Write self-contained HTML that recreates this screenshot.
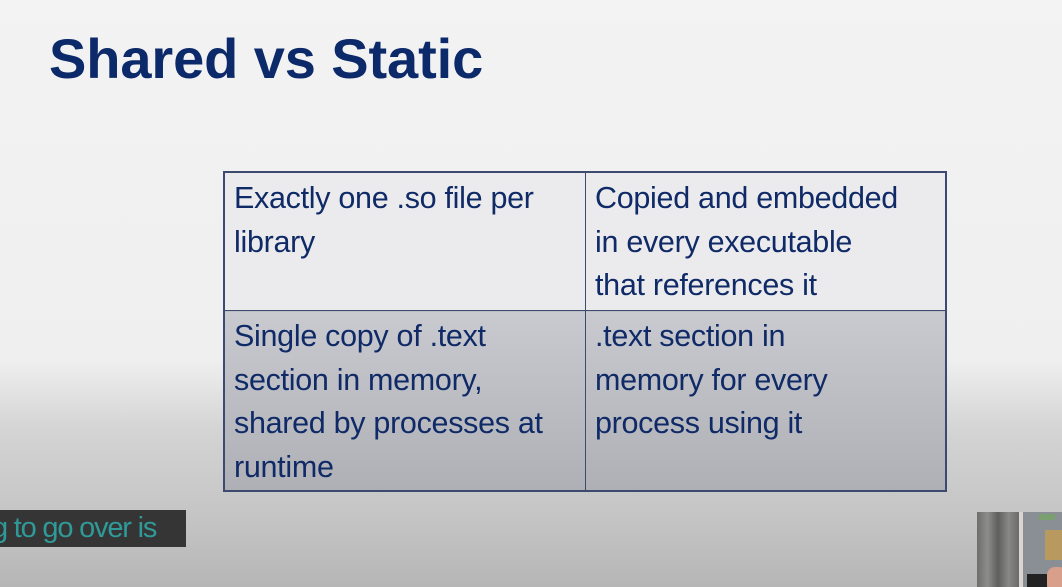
<!DOCTYPE html>
<html><head><meta charset="utf-8"><style>
html,body{margin:0;padding:0}
body{width:1062px;height:587px;overflow:hidden;position:relative;
background:linear-gradient(to bottom,#f3f3f3 0px,#efefef 360px,#d4d4d4 430px,#c4c4c4 520px,#b6b6b6 587px);
font-family:"Liberation Sans",sans-serif}
h1{position:absolute;left:49px;top:31px;margin:0;font-size:56px;line-height:56px;font-weight:bold;color:#0c2a6a;letter-spacing:-0.1px;white-space:nowrap}
table{position:absolute;left:223px;top:171px;width:724px;height:321px;border-collapse:collapse;border:2px solid #3b4a6e}
td{border:1.5px solid #3b4a6e;vertical-align:top;padding:4px 8px 0 9px;font-size:30.5px;line-height:43.5px;color:#0f2a66;letter-spacing:-0.3px;white-space:nowrap;overflow:hidden}
tr.a td{background:#ebebed;height:133px}
tr.b td{background:linear-gradient(to bottom,#c9cad0,#aeb0b6)}
td.l{width:343px}
.cap{position:absolute;left:0;top:510px;width:186px;height:37px;background:#353535;color:#2f9a98;font-size:29px;line-height:37px;text-indent:-8px;white-space:nowrap;overflow:hidden;letter-spacing:-1.2px}
.cam{position:absolute;left:977px;top:512px;width:85px;height:75px;background:#8a8f96;overflow:hidden}
</style></head><body>
<h1>Shared vs Static</h1>
<table>
<tr class="a"><td class="l">Exactly one .so file per<br>library</td><td>Copied and embedded<br>in every executable<br>that references it</td></tr>
<tr class="b"><td class="l">Single copy of .text<br>section in memory,<br>shared by processes at<br>runtime</td><td>.text section in<br>memory for every<br>process using it</td></tr>
</table>
<div class="cap">g to go over is</div>
<div class="cam">
<div style="position:absolute;left:0;top:0;width:42px;height:75px;background:linear-gradient(to right,#6e6e6c,#8d8d8a,#5f5f5d,#888885,#6a6a68)"></div>
<div style="position:absolute;left:42px;top:0;width:4px;height:75px;background:#d8d6cf"></div>
<div style="position:absolute;left:68px;top:18px;width:17px;height:30px;background:#b89a60"></div>
<div style="position:absolute;left:62px;top:2px;width:16px;height:6px;background:#7aa070"></div>
<div style="position:absolute;left:70px;top:55px;width:20px;height:25px;background:#d8a08a;border-radius:8px"></div>
<div style="position:absolute;left:50px;top:62px;width:20px;height:13px;background:#222"></div>
</div>
</body></html>
